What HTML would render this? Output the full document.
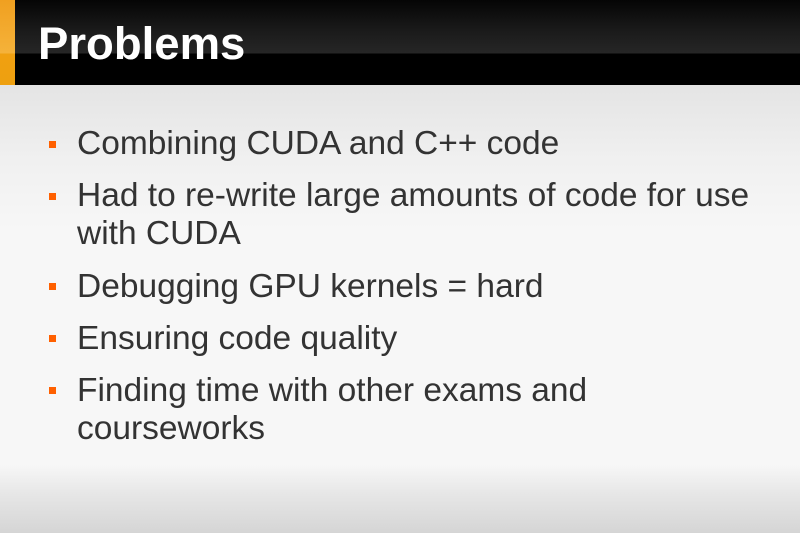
<!DOCTYPE html>
<html><head><meta charset="utf-8"><style>
html,body{margin:0;padding:0}
body{width:800px;height:533px;position:relative;overflow:hidden;font-family:"Liberation Sans",sans-serif;
background:linear-gradient(to bottom,#e4e4e4 85px,#f0f0f0 160px,#f7f7f7 230px,#f7f7f7 465px,#e6e6e6 495px,#d5d5d5 533px);}
.hd{position:absolute;left:0;top:0;width:800px;height:85px;background:linear-gradient(to bottom,#050505 0px,#1a1a1a 30px,#262626 53px,#000 54px,#000 85px);}
.bar{position:absolute;left:0;top:0;width:15px;height:85px;background:linear-gradient(to bottom,#f0a020 0,#f5b23a 53px,#f0a010 54px,#eea010 85px);}
.t{position:absolute;left:38px;top:19px;font-size:45.5px;font-weight:bold;color:#fff;line-height:50px}
.l{position:absolute;left:77px;font-size:33.5px;line-height:38px;color:#333;white-space:nowrap}
.b{position:absolute;left:49px;width:7px;height:7px;background:#ff6000}
</style></head><body>
<div class="hd"></div><div class="bar"></div>
<div class="t">Problems</div>
<div class="b" style="top:141px"></div><div class="l" style="top:125px">Combining CUDA and C++ code</div>
<div class="b" style="top:193px"></div><div class="l" style="top:177px">Had to re-write large amounts of code for use</div>
<div class="l" style="top:215px">with CUDA</div>
<div class="b" style="top:283px"></div><div class="l" style="top:268px">Debugging GPU kernels = hard</div>
<div class="b" style="top:335px"></div><div class="l" style="top:320px">Ensuring code quality</div>
<div class="b" style="top:387px"></div><div class="l" style="top:372px">Finding time with other exams and</div>
<div class="l" style="top:410px">courseworks</div>
</body></html>
